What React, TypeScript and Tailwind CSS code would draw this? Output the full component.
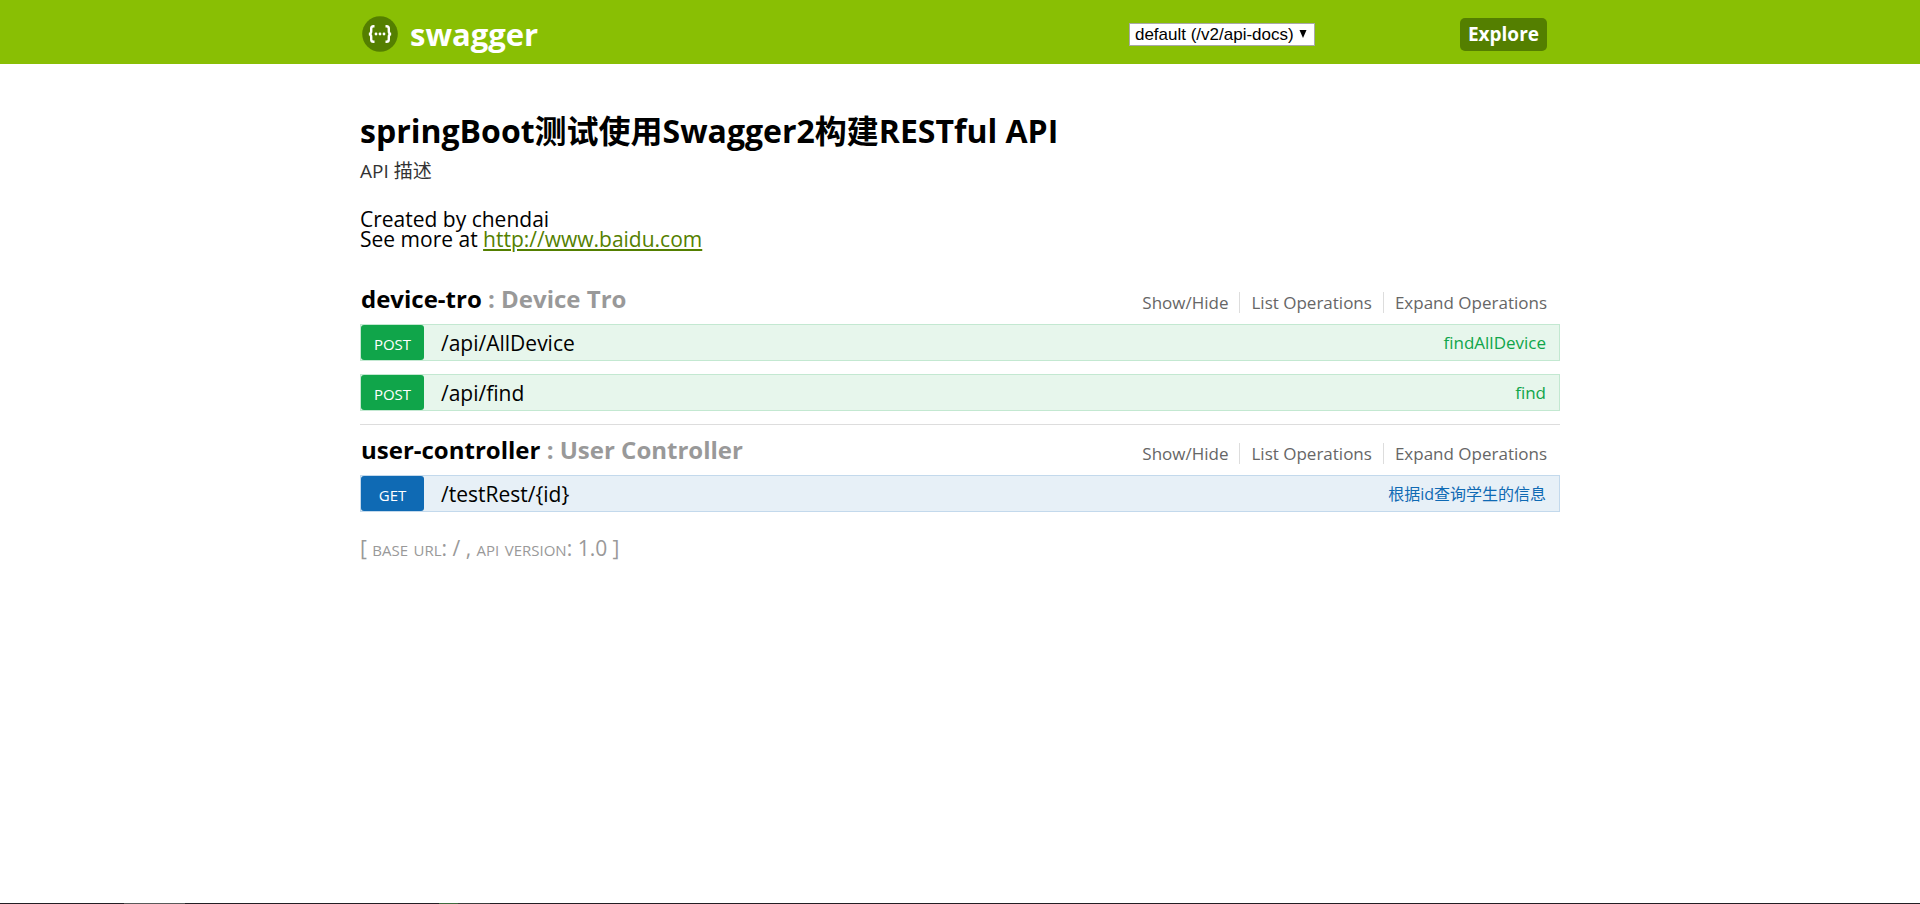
import { clsx } from 'clsx';

type Method = 'POST' | 'GET';

type Operation = {
  method: Method;
  path: string;
  summary: string;
};

type Resource = {
  name: string;
  description: string;
  operations: Operation[];
};

type MethodToken = {
  rowClassName: string;
  badgeClassName: string;
  summaryClassName: string;
};

const METHOD_TOKENS: Record<Method, MethodToken> = {
  POST: {
    rowClassName: 'border-[#c3e8d1] bg-[#e7f6ec]',
    badgeClassName: 'bg-[#10a54a]',
    summaryClassName: 'text-[17px] text-[#10a54a]',
  },
  GET: {
    rowClassName: 'border-[#c3d9ec] bg-[#e7f0f7]',
    badgeClassName: 'bg-[#0f6ab4]',
    summaryClassName: 'text-[16px] text-[#0f6ab4]',
  },
};

const RESOURCES: Resource[] = [
  {
    name: 'device-tro',
    description: 'Device Tro',
    operations: [
      { method: 'POST', path: '/api/AllDevice', summary: 'findAllDevice' },
      { method: 'POST', path: '/api/find', summary: 'find' },
    ],
  },
  {
    name: 'user-controller',
    description: 'User Controller',
    operations: [{ method: 'GET', path: '/testRest/{id}', summary: '根据id查询学生的信息' }],
  },
];

const RESOURCE_ACTIONS = ['Show/Hide', 'List Operations', 'Expand Operations'];

const Logo = () => (
  <svg viewBox="0 0 36 36" className="h-9 w-9" aria-hidden="true">
    <circle cx="18" cy="18" r="17.8" fill="#547f00" />
    <g fill="none" stroke="#fff" strokeWidth="2.4">
      <path d="M12.5 10.2h-1c-1.6 0-2.3.8-2.3 2.3v2.7c0 1.6-.7 2.6-2.2 2.8 1.5.2 2.2 1.2 2.2 2.8v2.7c0 1.5.7 2.3 2.3 2.3h1" />
      <path d="M23.5 10.2h1c1.6 0 2.3.8 2.3 2.3v2.7c0 1.6.7 2.6 2.2 2.8-1.5.2-2.2 1.2-2.2 2.8v2.7c0 1.5-.7 2.3-2.3 2.3h-1" />
    </g>
    <g fill="#fff">
      <circle cx="14" cy="18" r="1.4" />
      <circle cx="18" cy="18" r="1.4" />
      <circle cx="22" cy="18" r="1.4" />
    </g>
  </svg>
);

const Header = () => (
  <header className="h-16 bg-[#89bf04]">
    <div className="mx-auto flex h-full max-w-[1200px] items-center pt-1 pr-[13px] pl-[2px]">
      <a href="#" className="flex items-center gap-3 text-[31px] leading-8 font-bold text-white">
        <Logo />
        swagger
      </a>
      <form className="ml-auto flex items-center gap-[145px]" onSubmit={(e) => e.preventDefault()}>
        <div className="relative">
          <select
            aria-label="API docs"
            className="h-[23px] w-[186px] appearance-none border border-[#a9a9a9] bg-white pl-[5px] font-['Liberation_Sans',Arial,sans-serif] text-[17px] leading-5 text-black"
          >
            <option>default (/v2/api-docs)</option>
          </select>
          <svg
            viewBox="0 0 8 8"
            className="pointer-events-none absolute top-2 right-2 h-2 w-2"
            aria-hidden="true"
          >
            <path d="M0.5 0h7L4 8z" fill="#000" />
          </svg>
        </div>
        <button
          type="submit"
          className="h-[33px] rounded-[5px] bg-[#547f00] px-2 text-[19px] leading-8 font-bold text-white"
        >
          Explore
        </button>
      </form>
    </div>
  </header>
);

const OperationRow = ({ method, path, summary }: Operation) => {
  const token = METHOD_TOKENS[method];

  return (
    <li className={clsx('flex h-[37px] items-center border pr-[13px]', token.rowClassName)}>
      <a
        href="#"
        className={clsx(
          'mr-[17px] w-[63px] rounded-[3px] pt-1 text-center text-[15px] leading-[31px] text-white',
          token.badgeClassName
        )}
      >
        {method}
      </a>
      <a href="#" className="text-[21px] leading-6 text-black">
        {path}
      </a>
      <a href="#" className={clsx('ml-auto leading-6', token.summaryClassName)}>
        {summary}
      </a>
    </li>
  );
};

const ResourceSection = ({ name, description, operations }: Resource) => (
  <li className="border-b border-[#dddddd] pb-[13px] last:border-b-0">
    <div className="flex h-[50px] items-center justify-between pl-px">
      <h2 className="text-[24px] leading-8 font-bold text-[#999999]">
        <a href="#" className="text-black">
          {name}
        </a>{' '}
        : {description}
      </h2>
      <ul className="flex pt-[7px] text-[17px] leading-[21px] text-[#666666]">
        {RESOURCE_ACTIONS.map((action) => (
          <li
            key={action}
            className="border-r border-[#dddddd] px-[11px] last:border-r-0 last:pr-[13px]"
          >
            <a href="#">{action}</a>
          </li>
        ))}
      </ul>
    </div>
    <ul className="flex flex-col gap-[13px]">
      {operations.map((operation) => (
        <OperationRow key={operation.path} {...operation} />
      ))}
    </ul>
  </li>
);

export default function App() {
  return (
    <div className="flex min-h-screen flex-col bg-white font-['Open_Sans','Noto_Sans_CJK_SC',sans-serif] text-black">
      <Header />
      <main className="mx-auto w-full max-w-[1200px] grow pt-[47px]">
        <h1 className="text-[32px] leading-10 font-bold">
          springBoot测试使用Swagger2构建RESTful API
        </h1>
        <p className="mt-1 text-[19px] leading-8 text-[#333333]">API 描述</p>
        <div className="mt-[22px] text-[21px] leading-5">
          <p>Created by chendai</p>
          <p>
            See more at{' '}
            <a href="http://www.baidu.com" className="text-[#547f00] underline">
              http://www.baidu.com
            </a>
          </p>
        </div>
        <ul className="mt-[25px]">
          {RESOURCES.map((resource) => (
            <ResourceSection key={resource.name} {...resource} />
          ))}
        </ul>
        <p className="mt-[11px] text-[21px] leading-6 text-[#999999]">
          [ <span className="[font-variant:small-caps]">base url</span>: / ,{' '}
          <span className="[font-variant:small-caps]">api version</span>: 1.0 ]
        </p>
      </main>
      <div className="flex h-px bg-[#231f24]">
        <div className="ml-[124px] w-[61px] bg-[#5a5a5a]" />
        <div className="ml-[254px] w-[19px] bg-[#3f6b3f]" />
        <div className="w-8 bg-[#3c3c3c]" />
      </div>
    </div>
  );
}
